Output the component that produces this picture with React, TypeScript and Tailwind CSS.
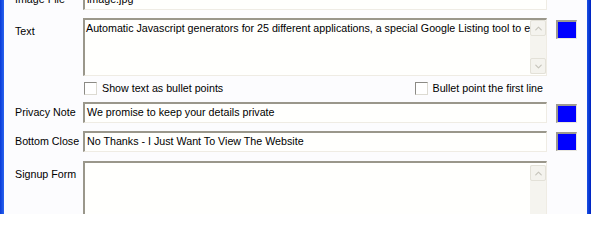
import { ChevronUp, ChevronDown } from 'lucide-react'

const sunken =
  'shrink-0 border-t-2 border-l-2 border-b border-r border-t-[#9a978b] border-l-[#9a978b] border-b-[#efece4] border-r-[#efece4] bg-[#fffffd]'

function Swatch({ className = '' }: { className?: string }) {
  return (
    <div
      className={`shrink-0 w-[21px] h-[19px] bg-[#0000ff] border-t-2 border-l-2 border-b border-r border-t-[#9d9a90] border-l-[#9d9a90] border-b-[#e8e6de] border-r-[#e8e6de] ${className}`}
    />
  )
}

function ScrollBtn({ up }: { up?: boolean }) {
  return (
    <div className="w-[16px] h-[16px] rounded-[2px] border border-[#e3e1d8] bg-[#f4f3ee] flex items-center justify-center">
      {up ? (
        <ChevronUp className="w-[11px] h-[11px] text-[#c6c4bb]" strokeWidth={2.5} />
      ) : (
        <ChevronDown className="w-[11px] h-[11px] text-[#c6c4bb]" strokeWidth={2.5} />
      )}
    </div>
  )
}

function Scrollbar({ tall }: { tall?: boolean }) {
  return (
    <div className={`w-[16px] flex flex-col justify-between bg-[#f5f4ef] ${tall ? 'h-[80px]' : 'h-[54px]'}`}>
      <ScrollBtn up />
      {!tall && <ScrollBtn />}
    </div>
  )
}

function Checkbox({ label }: { label: string }) {
  return (
    <div className="flex items-center gap-[5px] whitespace-nowrap">
      <div className="w-[13px] h-[13px] border border-t-[#8b8a85] border-l-[#8b8a85] border-b-[#dcdad2] border-r-[#dcdad2] bg-white" />
      <span>{label}</span>
    </div>
  )
}

const label = 'shrink-0 w-[79px] pl-[11px] whitespace-nowrap'

export default function App() {
  return (
    <div className="w-[591px] h-[214px] overflow-hidden flex bg-[#fcfcfe] text-[10.7px] text-black font-['Liberation_Sans',Arial,sans-serif]">
      <div className="shrink-0 w-[4px] h-full bg-gradient-to-r from-[#0a3ad8] to-[#2a63f0]" />
      <div className="flex-1 min-w-0 flex flex-col">
        {/* Image File */}
        <div className="flex items-center -mt-[11px] h-[21px]">
          <div className={label}>Image File</div>
          <div className={`w-[464px] h-[21px] ${sunken} pl-[2px] leading-[17px]`}>image.jpg</div>
        </div>

        {/* Text */}
        <div className="flex items-start mt-[8px]">
          <div className={`${label} pt-[5px]`}>Text</div>
          <div className={`w-[464px] h-[58px] ${sunken} flex`}>
            <div className="flex-1 min-w-0 overflow-hidden whitespace-nowrap pl-[1px] pt-[2px] leading-[13px]">
              Automatic Javascript generators for 25 different applications, a special Google Listing tool to every
            </div>
            <Scrollbar />
          </div>
          <Swatch className="ml-[9px] mt-[2px] h-[18px]" />
        </div>

        {/* Checkboxes */}
        <div className="flex items-center justify-between w-[459px] ml-[80px] mt-[6px] h-[12px]">
          <Checkbox label="Show text as bullet points" />
          <Checkbox label="Bullet point the first line" />
        </div>

        {/* Privacy Note */}
        <div className="flex items-start mt-[8px]">
          <div className={`${label} pl-[10px] h-[21px] flex items-center`}>Privacy Note</div>
          <div className={`w-[464px] h-[21px] ${sunken} pl-[2px] leading-[17px]`}>
            We promise to keep your details private
          </div>
          <Swatch className="ml-[9px] mt-[2px]" />
        </div>

        {/* Bottom Close */}
        <div className="flex items-start mt-[8px]">
          <div className={`${label} pl-[10px] h-[21px] flex items-center`}>Bottom Close</div>
          <div className={`w-[464px] h-[21px] ${sunken} pl-[2px] leading-[17px]`}>
            No Thanks - I Just Want To View The Website
          </div>
          <Swatch className="ml-[9px] mt-[1px]" />
        </div>

        {/* Signup Form */}
        <div className="flex items-start mt-[9px]">
          <div className={`${label} pt-[5px]`}>Signup Form</div>
          <div className={`w-[464px] h-[80px] ${sunken} flex justify-end`}>
            <div className="pt-[2px]">
              <Scrollbar tall />
            </div>
          </div>
        </div>
      </div>
      <div className="shrink-0 w-[4px] h-full bg-gradient-to-r from-[#1a4fe6] to-[#0020c0]" />
    </div>
  )
}
